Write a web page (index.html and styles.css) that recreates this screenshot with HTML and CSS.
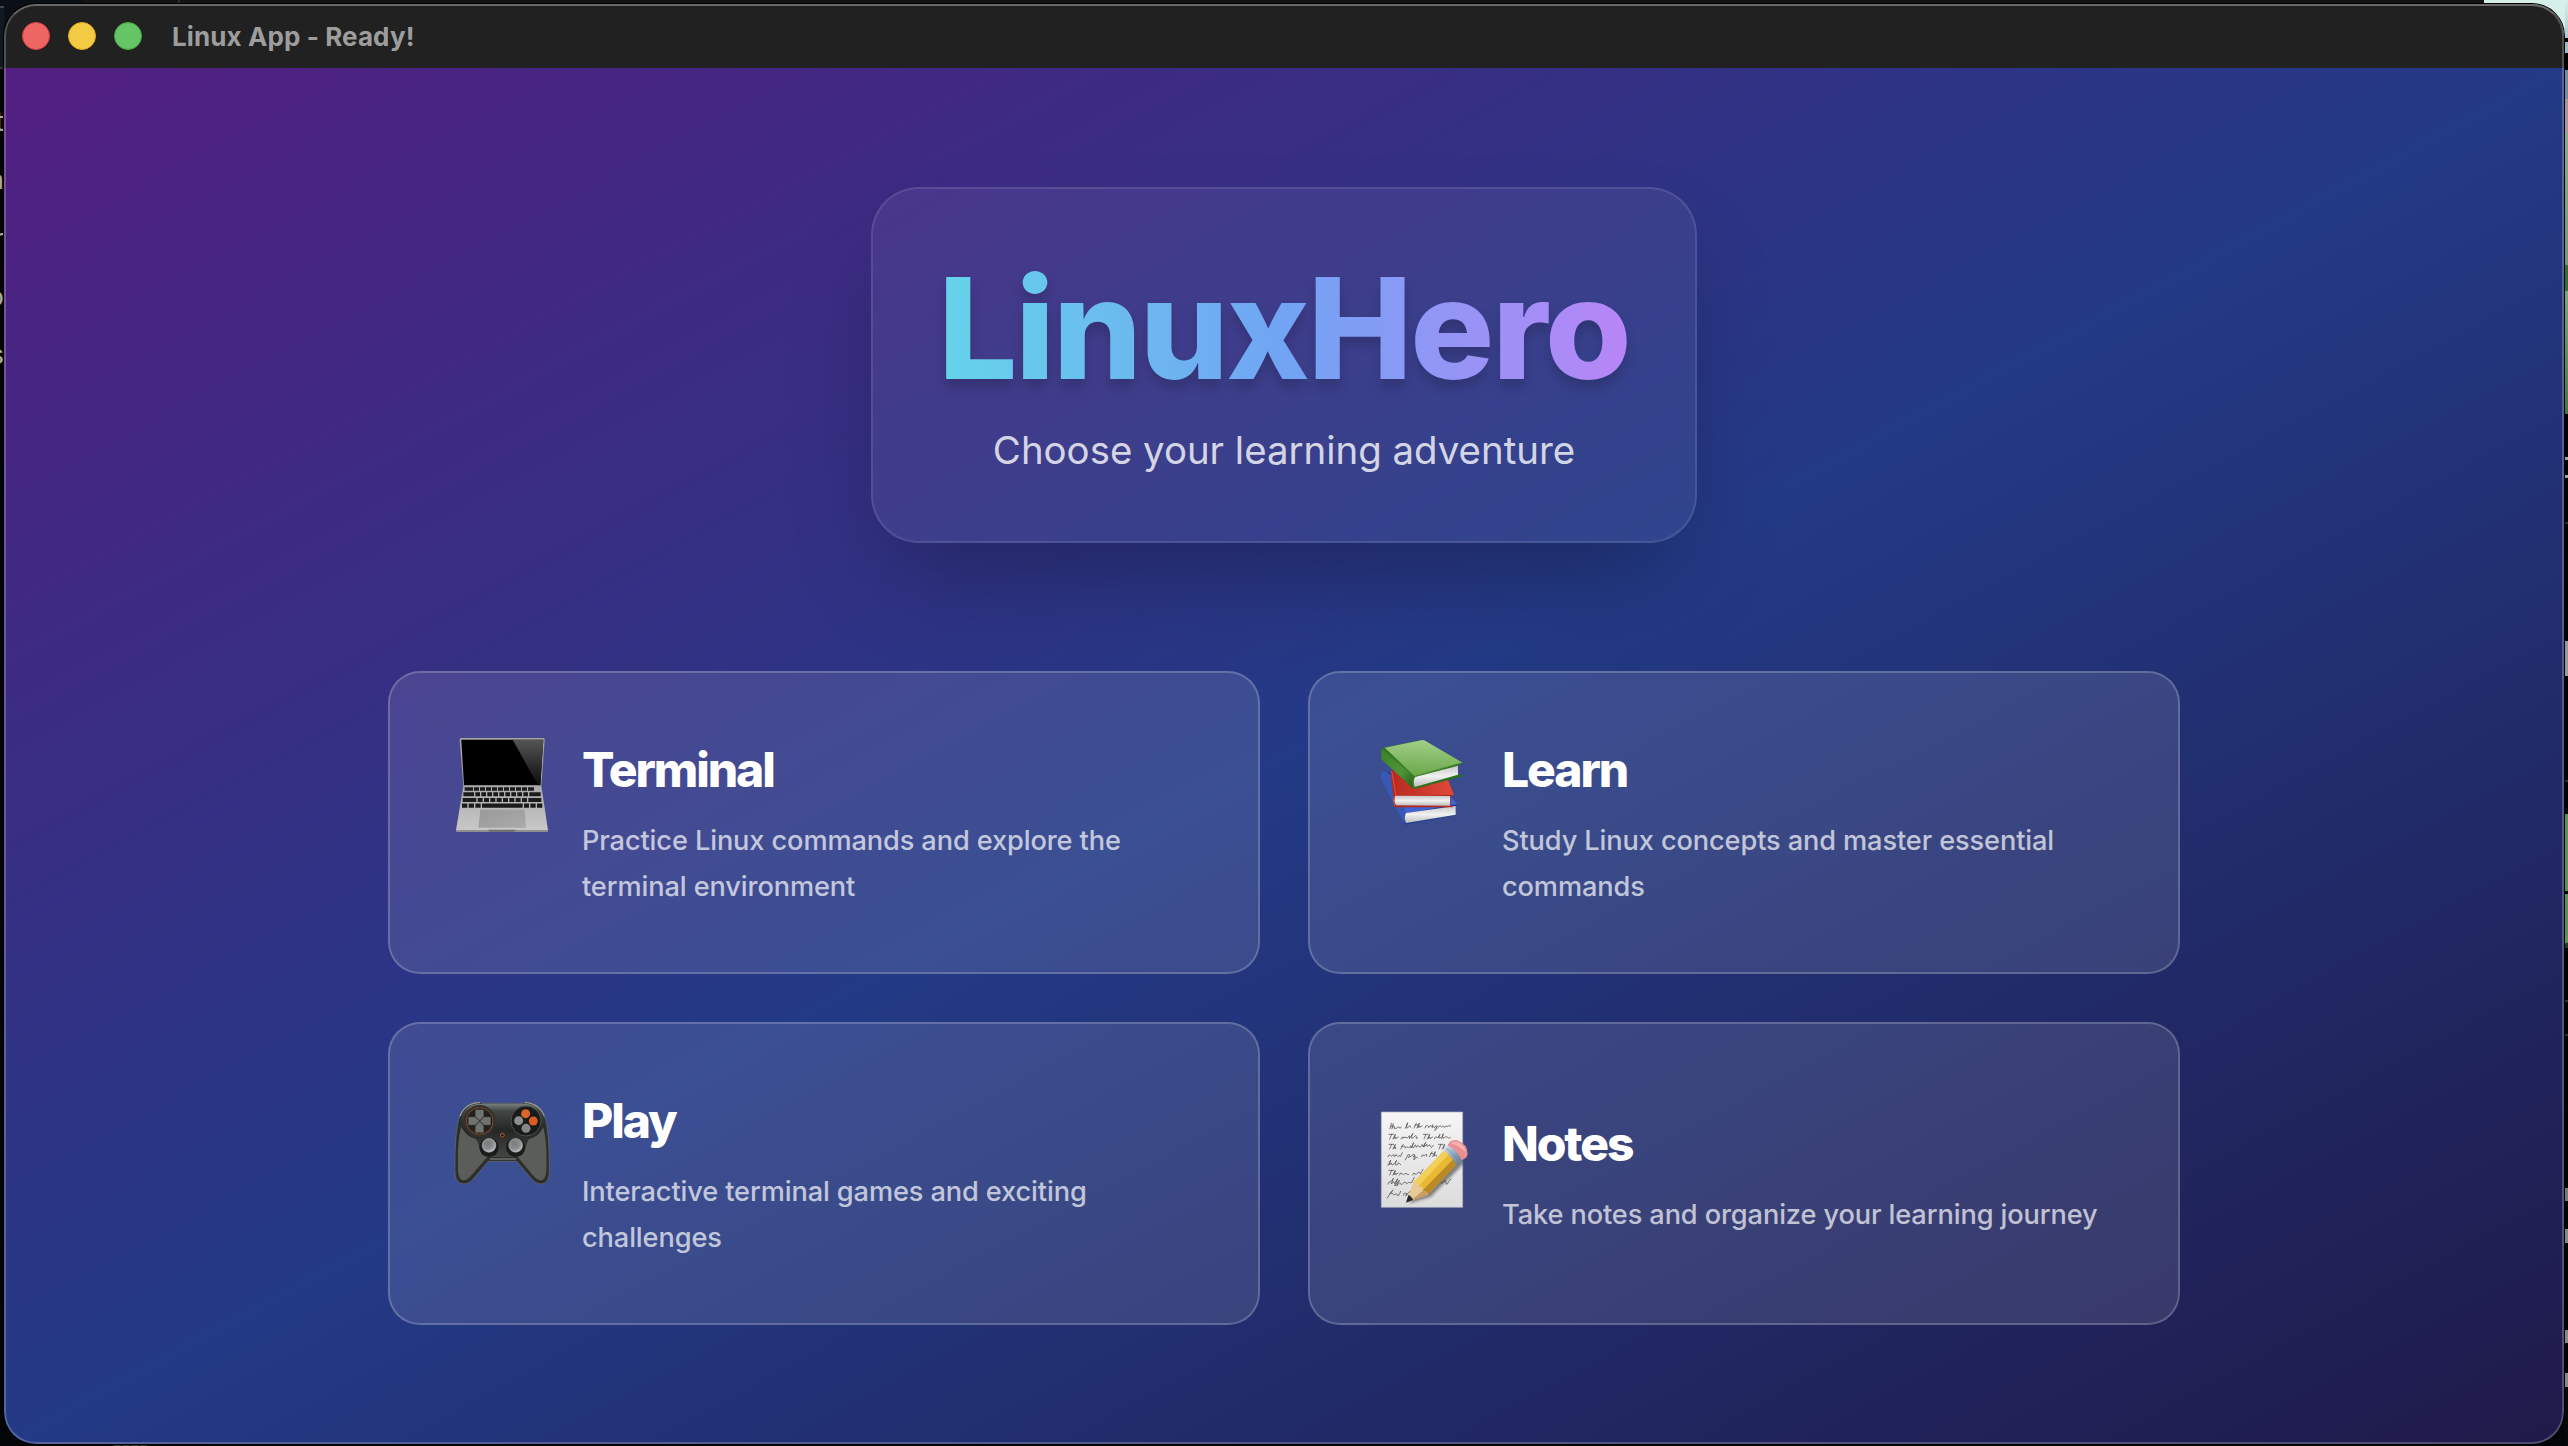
FILE: index.html
```html
<!DOCTYPE html>
<html lang="en">
<head>
<meta charset="utf-8">
<title>Linux App - Ready!</title>
<link rel="stylesheet" href="styles.css">
</head>
<body>
<div class="desktop">
  <div class="behind-top"></div>
  <div class="behind-left"><span>t</span><span>a</span><span>r</span><span>o</span><span>s</span></div>
  <div class="behind-right"></div>
  <div class="behind-bottom"></div>

  <div class="window">
    <header class="titlebar">
      <i class="light light-close"></i>
      <i class="light light-min"></i>
      <i class="light light-max"></i>
      <span class="titlebar-text">Linux App - Ready!</span>
    </header>

    <main class="home">
      <section class="hero">
        <h1>LinuxHero</h1>
        <p>Choose your learning adventure</p>
      </section>

      <section class="menu">
        <a class="card">
          <svg class="icon" viewBox="222 231 288 288">
            <defs>
              <linearGradient id="lapBase" x1="0" y1="0" x2="0" y2="1"><stop offset="0" stop-color="#a9a9a9"/><stop offset="1" stop-color="#c9c9c9"/></linearGradient>
              <linearGradient id="lapGlare" x1="0" y1="0" x2="0" y2="1"><stop offset="0" stop-color="#555"/><stop offset="1" stop-color="#0c0c0c"/></linearGradient>
              <linearGradient id="lapPad" x1="0" y1="0" x2="1" y2="1"><stop offset="0" stop-color="#999"/><stop offset="1" stop-color="#aaa"/></linearGradient>
            </defs>
            <path d="M243 234H490Q494 234 494 240L484 378H250L239 240Q239 234 243 234Z" fill="#a5a5a5"/>
            <path d="M244 239H490L481 376H252Z" fill="#000"/>
            <path d="M398 239H490L481 376H474Z" fill="url(#lapGlare)"/>
            <path d="M250 377H484L504 511Q504 515 500 515H233Q228 515 228 511Z" fill="url(#lapBase)"/>
            <path d="M228 510H504Q504 516 500 516H233Q228 516 228 510Z" fill="#8f8f8f"/>
            <path d="M324 509H408L402 515H330Z" fill="#6d6d6d"/>
            <path d="M301 449H434L438 503H295Z" fill="url(#lapPad)"/>
            <g stroke="#1b1b1b" fill="none">
              <path d="M254 387H480" stroke-width="11" stroke-dasharray="25 3 15 3 15 3 15 3 15 3 15 3 15 3 15 3 15 3 15 3 18"/>
              <path d="M250 403H482" stroke-width="12" stroke-dasharray="32 4 14 4 14 4 14 4 14 4 14 4 14 4 14 4 14 4 14 4 40"/>
              <path d="M248 420H484" stroke-width="12" stroke-dasharray="41 4 15 4 15 4 15 4 15 4 15 4 15 4 15 4 15 4 50"/>
              <path d="M246 437H487" stroke-width="13" stroke-dasharray="16 4 16 4 16 4 122 4 15 4 16 4 18"/>
            </g>
          </svg>
          <div class="card-text">
            <h2>Terminal</h2>
            <p>Practice Linux commands and explore the terminal environment</p>
          </div>
        </a>

        <a class="card">
          <svg class="icon" viewBox="222 231 288 288">
            <defs>
              <linearGradient id="bkGreen" x1=".5" y1="0" x2=".4" y2="1"><stop offset="0" stop-color="#a2cf87"/><stop offset="1" stop-color="#69a648"/></linearGradient>
              <linearGradient id="bkSpine" x1="0" y1="0" x2="1" y2="1"><stop offset="0" stop-color="#3e8129"/><stop offset=".6" stop-color="#4f9436"/><stop offset="1" stop-color="#235c17"/></linearGradient>
              <linearGradient id="bkRed" x1="0" y1="0" x2="1" y2="0"><stop offset="0" stop-color="#b92a1e"/><stop offset="1" stop-color="#e0493a"/></linearGradient>
              <linearGradient id="bkPage" x1="0" y1="0" x2="0" y2="1"><stop offset="0" stop-color="#c6c6c6"/><stop offset=".5" stop-color="#f1f1f1"/><stop offset="1" stop-color="#bcbcbc"/></linearGradient>
            </defs>
            <path d="M241 340Q246 333 256 334L440 400L474 432L468 437V466L314 494L241 355Z" fill="#223c94"/>
            <path d="M285 440L440 400L474 432L318 460Z" fill="#4263d0"/>
            <path d="M241 340Q246 333 256 334L280 350L318 460L313 493L241 355Z" fill="#3758b4"/>
            <path d="M318 459L467 438V464L318 489Q311 473 318 459Z" fill="url(#bkPage)"/>
            <path d="M275 330L440 350L462 403L452 408V436L460 442L284 442L273 352Z" fill="#b4291d"/>
            <path d="M278 332L440 350L462 404L290 407Z" fill="url(#bkRed)"/>
            <path d="M286 407L450 408V437L288 436Q280 422 286 407Z" fill="url(#bkPage)"/>
            <path d="M283 409Q278 424 284 438M275 334L288 406" stroke="#e4503f" stroke-width="3" fill="none"/>
            <path d="M244 270Q246 264 256 262L367 240L488 308L474 317V341L491 348L342 387L244 297Z" fill="#2d701d"/>
            <path d="M244 268L343 350L339 386L244 297Z" fill="url(#bkSpine)"/>
            <path d="M254 263L367 240Q372 240 378 244L488 308L345 350Z" fill="url(#bkGreen)"/>
            <path d="M345 351L474 317V344L344 381Q337 365 345 351Z" fill="url(#bkPage)"/>
            <path d="M247 267L344 349L487 308M342 351Q336 367 341 384" stroke="#438a2c" stroke-width="3" fill="none"/>
          </svg>
          <div class="card-text">
            <h2>Learn</h2>
            <p>Study Linux concepts and master essential commands</p>
          </div>
        </a>

        <a class="card">
          <svg class="icon" viewBox="222 233 288 288">
            <defs>
              <linearGradient id="padBody" x1="0" y1="0" x2="0" y2="1"><stop offset="0" stop-color="#78807c"/><stop offset=".14" stop-color="#414644"/><stop offset=".5" stop-color="#242624"/><stop offset="1" stop-color="#464743"/></linearGradient>
              <radialGradient id="padStick" cx=".4" cy=".35" r=".7"><stop offset="0" stop-color="#777b7b"/><stop offset=".6" stop-color="#8b8f8f"/><stop offset="1" stop-color="#c5c9c9"/></radialGradient>
            </defs>
            <path d="M240 315Q255 275 302 275L306 279H430L434 275Q481 276 494 320Q509 360 508 490Q506 521 482 521Q467 521 455 506L410 453H325L280 506Q268 521 252 521Q227 520 225 490Q223 360 240 315Z" fill="#2d2f2d" stroke="#6b6f6c" stroke-width="2"/>
            <path d="M244 350Q231 390 234 485Q238 512 252 510Q263 508 275 494L325 436L288 386Q258 378 244 350Z" fill="#5b5d59"/>
            <path d="M489 350Q502 390 499 485Q495 512 481 510Q470 508 458 494L410 436L446 386Q476 378 489 350Z" fill="#5b5d59"/>
            <path d="M244 325Q254 280 302 280H432Q480 280 491 325Q494 372 446 387L430 428Q421 441 400 440H335Q313 441 304 428L290 387Q242 373 244 325Z" fill="url(#padBody)"/>
            <path d="M330 446H408" stroke="#686b67" stroke-width="5"/>
            <path d="M240 318Q255 278 300 277M434 277Q478 279 493 318" stroke="#969b98" stroke-width="4" fill="none"/>
            <circle cx="299" cy="332" r="48" fill="#303330"/><circle cx="299" cy="332" r="40" fill="#202220" stroke="#8b4722" stroke-width="3"/>
            <g fill="#6f736d" stroke="#8b8f88" stroke-width="1">
              <path d="M287 299H310V318L299 330L287 318Z"/><path d="M287 366H310V346L299 334L287 346Z"/>
              <path d="M266 321H285L297 332L285 343H266Z"/><path d="M331 321H312L301 332L312 343H331Z"/>
            </g>
            <circle cx="438" cy="332" r="45" fill="#191b1a" stroke="#4c4f4d" stroke-width="3"/>
            <circle cx="437" cy="310" r="13.5" fill="#dd6528"/><circle cx="460" cy="332" r="13.5" fill="#d95c20"/>
            <circle cx="416" cy="331" r="13.5" fill="#8d8e90"/><circle cx="438" cy="354" r="13.5" fill="#858789"/>
            <circle cx="367" cy="375" r="12" fill="#1e201f" stroke="#454745" stroke-width="1.5"/><circle cx="367" cy="375" r="6" fill="none" stroke="#c3602d" stroke-width="3"/>
            <circle cx="327" cy="411" r="29" fill="#1a1c1b"/><circle cx="407" cy="411" r="29" fill="#1a1c1b"/>
            <circle cx="327" cy="405" r="20.5" fill="url(#padStick)" stroke="#a9adad" stroke-width="2"/>
            <circle cx="407" cy="405" r="20.5" fill="url(#padStick)" stroke="#a9adad" stroke-width="2"/>
          </svg>
          <div class="card-text">
            <h2>Play</h2>
            <p>Interactive terminal games and exciting challenges</p>
          </div>
        </a>

        <a class="card">
          <svg class="icon" viewBox="222 301 288 288">
            <defs>
              <linearGradient id="ntPaper" x1="0" y1="0" x2="0" y2="1"><stop offset="0" stop-color="#f5f5f5"/><stop offset="1" stop-color="#dcdcdc"/></linearGradient>
              <linearGradient id="ntFerrule" x1="0" y1="0" x2="1" y2="1"><stop offset="0" stop-color="#dde6ee"/><stop offset=".5" stop-color="#8fa6bd"/><stop offset="1" stop-color="#5f7184"/></linearGradient>
              <filter id="ntBlur" x="-20%" y="-20%" width="140%" height="140%"><feGaussianBlur stdDeviation="4"/></filter>
              <clipPath id="ntClip"><path d="M243 303H489V591H243Z"/></clipPath>
            </defs>
            <path d="M244 304H488V590H244Z" fill="url(#ntPaper)" stroke="#aeb0bd" stroke-width="2"/>
            <g fill="none" stroke="#3c3c3c" stroke-width="2" stroke-linecap="round" stroke-linejoin="round">
              <path d="M269 354l6-16m-3 9l8-2m0-6l-5 15q8-10 10-5q-6 6 1 5t8-5t6 4l3-4M316 353l7-17q-5 15-2 16t6-5t5 3M342 352l7-14m-4 5h8m-2 9l7-15l-4 14q7-10 5-1l8-5M375 352q1-9 7-7t4 6l4-6q3 5 7-1t-1 7q7-8 8 0q5-9 8-5l-8 14q10-10 13-13q5-3 8 2q4-5 6 0t6-3q5 4 8-1q4 4 8 0"/>
              <path d="M267 371h14m-6 0l-6 14m10 0l7-14l-4 13q7-9 5 0l8-5M303 385q4-11 6-2q4-9 6-1q3-4 5-1t6-4t2 7l11-16q-8 16-3 15t9-7t4 7l4-1M370 371h14m-6 0l-6 14m10 0l7-14l-4 13q7-9 5 0l8-5M403 384q4-10 7-4q3 4 8-6t-2 8q7-4 8 2l6-15q-4 15-1 14t7-4t9 3l6-1"/>
              <path d="M267 401h14m-6 0l-6 14m10 0l7-14l-4 13q7-9 5 0M302 415l8-14m-5 6h8q4 2 2 5q6-6 8-2t6-2t4 4l8-16q-7 14-3 15t6-6t5 5q4-10 8-3t7-2t5 4l8-14l-6 14l10-8q-2 10 4 4t7 2t8-3M415 401h14m-6 0l-6 14m10 0l7-14l-4 13"/>
              <path d="M264 438q4-10 7-4q2 6 7 0t6 4q4-10 7-4t5 2t5 2l6-12M316 448l8-16q9-1 3 6t8-3t5 5q5-10 6-3l-5 11q9-13 13-6M364 438l4-6q3 8 8 1t4 4M388 438l8-14m-4 5h8m-2 9l8-15l-4 14q7-9 8-1"/>
              <path d="M264 464l8-16l-4 15q7-10 7-3t8-1l7-10q-8 14-2 14t6-5t8 4"/>
              <path d="M267 479h14m-6 0l-6 14m10 0l7-14l-4 13q7-9 5 0l8-5M298 493q4-10 8-4t6 2t6-2t8 3M338 493q4-10 7-4t8-2t8 3l8-14"/>
              <path d="M264 520q2-10 9-7l7-10l-6 17q8-12 9-1l10-15l-9 22l14-18l-8 18q10-14 12-7t6 0t8-4t4 4l6-4q6 1 9 1l8-16M414 520q6-12 9-5t8-2t7 3t7-2l8-9"/>
              <path d="M262 562q10-20 18-24q-6 4-9 11q7-4 8 1t7 1t7 3t9-12M310 554q2-11 9-6t-3 7l14-13"/>
            </g>
            <g clip-path="url(#ntClip)"><path d="M328 578L392 558L490 460L498 432L470 420L350 540Z" fill="#000" opacity=".45" filter="url(#ntBlur)"/></g>
            <path d="M340 516L434 418L474 456L384 552L320 574Z" fill="#eab934"/>
            <path d="M340 516L434 418L447 430L352 530Z" fill="#f3cf56"/>
            <path d="M366 541L461 444L474 457L384 552Z" fill="#b98a26"/>
            <path d="M340 516Q356 516 357 528Q370 526 368 540Q380 540 384 552L320 575Z" fill="#e9c997"/>
            <path d="M368 540Q380 540 384 552L330 572Z" fill="#c79d67"/>
            <path d="M325 553Q335 556 339 568L318 576Z" fill="#232a33"/>
            <path d="M432 420L444 403Q468 415 485 447L470 466Q457 438 432 420Z" fill="url(#ntFerrule)"/>
            <path d="M437 413Q463 428 477 459" stroke="#72879d" stroke-width="2" fill="none"/>
            <path d="M443 404Q450 386 470 388Q503 400 503 430Q501 443 485 448Q470 416 443 404Z" fill="#ec8f93"/>
            <path d="M452 398Q462 389 474 394Q494 404 497 425Q480 405 452 398Z" fill="#f6b4b3"/>
          </svg>
          <div class="card-text">
            <h2>Notes</h2>
            <p>Take notes and organize your learning journey</p>
          </div>
        </a>
      </section>
    </main>
  </div>
</div>
</body>
</html>
```
FILE: styles.css
```css
* { box-sizing: border-box; margin: 0; padding: 0; }

body {
  width: 2568px;
  height: 1446px;
  overflow: hidden;
  font-family: Inter, "Liberation Sans", sans-serif;
  background: #030506;
}

.desktop {
  position: relative;
  height: 1446px;
  padding: 4px;
}

/* Slivers of the windows behind the app */
.behind-top {
  position: absolute;
  inset: 0 0 auto 0;
  height: 40px;
  background: linear-gradient(90deg, #0b1018 84px, #141414 84px 178px, #2c2c2c 178px 180px, #141414 180px 2484px, #d5efe9 2484px);
}
.behind-left {
  position: absolute;
  left: 0;
  top: 6px;
  width: 4px;
  height: 420px;
  padding-top: 87px;
  display: flex;
  flex-direction: column;
  align-items: flex-end;
  overflow: hidden;
  color: #aaa;
  font-size: 27px;
  line-height: 58.3px;
  background: linear-gradient(#454850 2px, #101820 2px 61px, #33363a 61px 63px, #050505 63px);
}
.behind-right {
  position: absolute;
  right: 0;
  top: 0;
  width: 3px;
  height: 1446px;
  background: linear-gradient(#d8efea 0, #a9c9cf 38px, #000 38px 42px, #9cbcc6 42px 53px, #000 53px 70px, #6d8da0 70px 99px, #a5969c 99px 133px, #7fae8a 133px, #6b9a78 265px, #2f6e35 265px 291px, #74a97c 291px, #3b7a40 414px, #020202 414px 457px, #a5a5a8 457px 460px, #020202 460px 475px, #a5a5a8 475px 478px, #020202 478px 522px, #2e2e30 522px 524px, #020202 524px 641px, #98989c 641px 676px, #020202 676px 780px, #2e2e30 780px 782px, #020202 782px 814px, #559458 814px 891px, #020202 891px 894px, #559458 894px 943px, #1d3a20 943px 948px, #020202 948px 1000px, #2e2e30 1000px 1002px, #020202 1002px 1034px, #2e2e30 1034px 1036px, #020202 1036px 1188px, #77797c 1188px 1201px, #020202 1201px 1229px, #85878a 1229px 1243px, #020202 1243px 1330px, #85878a 1330px 1343px, #020202 1343px 1373px, #85878a 1373px 1387px, #05090b 1387px);
}
.behind-bottom {
  position: absolute;
  left: 114px;
  bottom: 0;
  width: 36px;
  height: 1px;
  background: repeating-linear-gradient(90deg, #333 0 6px, #111 6px 9px);
}

.window {
  position: relative;
  width: 2560px;
  height: 1440px;
  border-radius: 32px;
  overflow: hidden;
  box-shadow: 0 0 0 1px #000;
}
/* Hairline frame over the window edge */
.window::after {
  content: "";
  position: absolute;
  inset: 0;
  border: 2px solid rgba(255, 255, 255, 0.22);
  border-top-color: rgba(255, 255, 255, 0.32);
  border-radius: 32px;
  pointer-events: none;
}

.titlebar {
  display: flex;
  align-items: center;
  gap: 18px;
  height: 64px;
  padding-left: 18px;
  background: #212121;
}
.light { width: 28px; height: 28px; border-radius: 50%; border: 1px solid; }
.light-close { background: #ee6664; border-color: #dc4040; }
.light-min { background: #f3ca44; border-color: #dfac1d; }
.light-max { background: #65c466; border-color: #3fab42; }
.titlebar-text {
  margin-left: 12px;
  color: #9d9d9d;
  font-size: 26px;
  font-weight: 700;
  letter-spacing: 0.1px;
}

.home {
  display: flex;
  flex-direction: column;
  align-items: center;
  gap: 128px;
  height: 1376px;
  padding-top: 119px;
  background: linear-gradient(to bottom right, #521f81, #233a86 50%, #1f1a49);
}

.hero {
  width: 826px;
  height: 356px;
  padding: 67px 64px 0;
  text-align: center;
  border: 2px solid rgba(255, 255, 255, 0.1);
  border-radius: 48px;
  background: rgba(255, 255, 255, 0.06);
  box-shadow: 0 50px 100px -24px rgba(0, 0, 0, 0.28);
}
.hero h1 {
  width: fit-content;
  margin: 0 auto 22px;
  font-size: 140px;
  font-weight: 800;
  line-height: 144px;
  letter-spacing: -2.1px;
  color: transparent;
  background: linear-gradient(90deg, #65d4ea, #71a4f4 50%, #b985f7);
  background-clip: text;
  -webkit-background-clip: text;
  filter: drop-shadow(0 8px 6px rgba(0, 0, 0, 0.17));
}
.hero p {
  font-size: 38.4px;
  line-height: 56px;
  color: rgba(255, 255, 255, 0.8);
}

.menu {
  display: grid;
  grid-template-columns: 872px 872px;
  grid-auto-rows: 302.8px;
  gap: 48px;
}
.card {
  display: flex;
  align-content: center;
  flex-wrap: wrap;
  align-items: flex-start;
  gap: 32px;
  padding: 0 64px;
  border: 2px solid rgba(255, 255, 255, 0.2);
  border-radius: 32px;
  background: rgba(255, 255, 255, 0.11);
}
.icon { width: 96px; height: 96px; margin-top: 1px; overflow: visible; }
.card-text { flex: 1; transform: translateY(1.5px); }
.card h2 {
  margin-bottom: 16px;
  color: #fff;
  font-size: 48px;
  font-weight: 800;
  line-height: 64px;
  letter-spacing: -0.043em;
}
.card p {
  color: rgba(255, 255, 255, 0.7);
  font-size: 27.2px;
  font-weight: 450;
  line-height: 46px;
  letter-spacing: -0.12px;
}
```
